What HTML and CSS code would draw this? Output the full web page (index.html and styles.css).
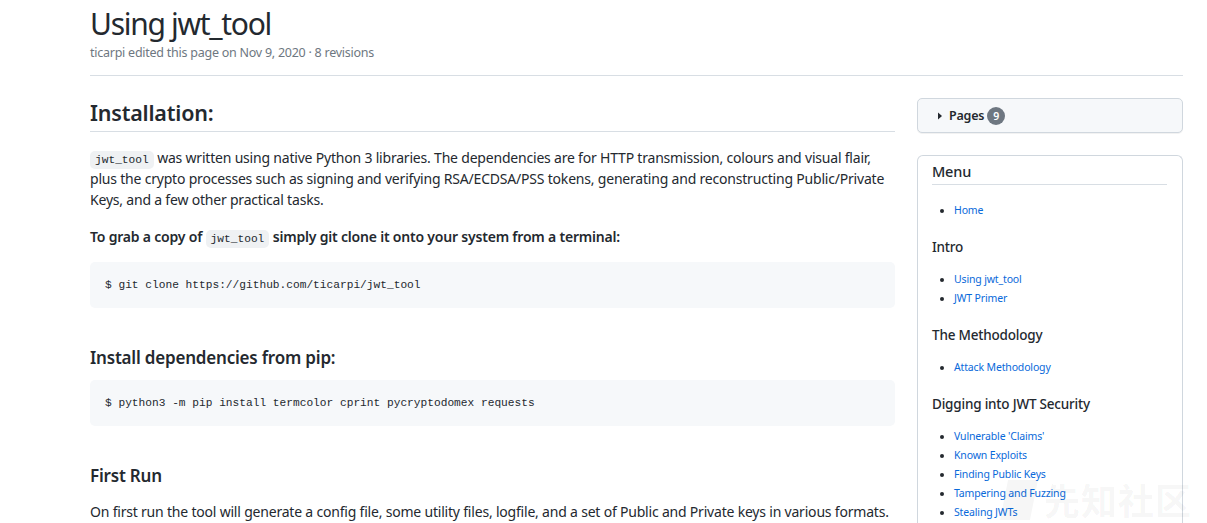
FILE: index.html
```html
<!DOCTYPE html>
<html>
<head>
<meta charset="utf-8">
<link rel="stylesheet" href="styles.css">
</head>
<body>
<div class="page">
  <header class="head">
    <h1 class="title">Using jwt_tool</h1>
    <div class="meta">ticarpi edited this page on Nov 9, 2020 · 8 revisions</div>
  </header>
  <div class="layout">
    <main class="main">
      <h2 class="h2">Installation:</h2>
      <p class="p"><code class="ic">jwt_tool</code> was written using native Python 3 libraries. The dependencies are for HTTP transmission, colours and visual flair, plus the crypto processes such as signing and verifying RSA/ECDSA/PSS tokens, generating and reconstructing Public/Private Keys, and a few other practical tasks.</p>
      <p class="p"><strong>To grab a copy of <code class="ic">jwt_tool</code> simply git clone it onto your system from a terminal:</strong></p>
      <pre class="pre">$ git clone https://github.com/ticarpi/jwt_tool</pre>
      <h3 class="h3">Install dependencies from pip:</h3>
      <pre class="pre">$ python3 -m pip install termcolor cprint pycryptodomex requests</pre>
      <h3 class="h3">First Run</h3>
      <p class="p">On first run the tool will generate a config file, some utility files, logfile, and a set of Public and Private keys in various formats.</p>
    </main>
    <aside class="side">
      <div class="pages">
        <svg class="caret" width="6" height="8" viewBox="0 0 6 8"><path d="M1 0.5 L5 4 L1 7.5 Z" fill="#24292f"/></svg>
        <span class="pages-label">Pages</span>
        <span class="count">9</span>
      </div>
      <div class="menu">
        <div class="menu-title">Menu</div>
        <ul class="list"><li><a href="#">Home</a></li></ul>
        <div class="sec">Intro</div>
        <ul class="list"><li><a href="#">Using jwt_tool</a></li><li><a href="#">JWT Primer</a></li></ul>
        <div class="sec">The Methodology</div>
        <ul class="list"><li><a href="#">Attack Methodology</a></li></ul>
        <div class="sec">Digging into JWT Security</div>
        <ul class="list"><li><a href="#">Vulnerable 'Claims'</a></li><li><a href="#">Known Exploits</a></li><li><a href="#">Finding Public Keys</a></li><li><a href="#">Tampering and Fuzzing</a></li><li><a href="#">Stealing JWTs</a></li></ul>
      </div>
    </aside>
  </div>
</div>
<div class="watermark"><svg class="wm-logo" width="38" height="40" viewBox="0 0 38 40"><path d="M8 0 H38 L30 40 H0 Z" fill="rgba(0,0,0,0.035)"/></svg><span>先知社区</span></div>
</body>
</html>
```
FILE: styles.css
```css
* { box-sizing: border-box; }
html, body { margin: 0; padding: 0; background: #fff; }
body {
  font-family: "Noto Sans", "Open Sans", sans-serif;
  color: #24292f;
  overflow: hidden;
  height: 523px;
}
.page {
  width: 1093px;
  margin-left: 90px;
}
.head {
  padding-top: 4px;
  border-bottom: 1px solid #d8dee4;
  padding-bottom: 14px;
}
.title {
  font-size: 30px;
  font-weight: 400;
  margin: 0;
  line-height: 40px;
  letter-spacing: -1.3px;
}
.meta {
  font-size: 12.5px;
  color: #6e7781;
  margin-top: 1px;
  line-height: 16px;
  letter-spacing: -0.25px;
}
.layout {
  display: flex;
  gap: 22px;
  margin-top: 22px;
}
.main {
  width: 805px;
  flex: none;
}
.side {
  width: 266px;
  flex: none;
}
.h2 {
  font-size: 21.5px;
  font-weight: 600;
  margin: 0;
  padding-top: 0;
  line-height: 30px;
  padding-bottom: 3px;
  border-bottom: 1px solid #d8dee4;
  letter-spacing: -0.2px;
}
.p {
  font-size: 14px;
  line-height: 21px;
  margin: 15px 0 0;
  letter-spacing: -0.2px;
}
.p + .p { margin-top: 16px; }
strong { font-weight: 600; }
.ic {
  font-family: "Liberation Mono", "DejaVu Sans Mono", monospace;
  font-size: 11.2px;
  line-height: 1;
  background: #eff1f3;
  border-radius: 5px;
  padding: 3px 5px;
  letter-spacing: 0;
  font-weight: 400;
}
.pre {
  font-family: "Liberation Mono", "DejaVu Sans Mono", monospace;
  font-size: 11.2px;
  background: #f6f8fa;
  border-radius: 5px;
  margin: 15px 0 0;
  padding: 15px 15px;
  line-height: 16px;
  height: 46px;
  color: #24292f;
}
.h3 {
  font-size: 17px;
  font-weight: 600;
  margin: 38px 0 0;
  line-height: 24px;
  letter-spacing: -0.2px;
}
.h3 + .pre { margin-top: 10px; }
.h3 + .p { margin-top: 13px; }
.pages {
  height: 35px;
  background: #f6f8fa;
  border: 1px solid #d0d7de;
  border-radius: 5px;
  box-shadow: 0 1px 0 rgba(31,35,40,0.06);
  display: flex;
  align-items: center;
  padding-left: 19px;
  margin-top: 0;
}
.caret { margin-right: 6px; }
.pages-label {
  font-size: 12.5px;
  font-weight: 600;
  letter-spacing: -0.2px;
}
.count {
  display: inline-flex;
  align-items: center;
  justify-content: center;
  width: 18px;
  height: 18px;
  border-radius: 9px;
  background: #6e7781;
  color: #fff;
  font-size: 10.5px;
  font-weight: 600;
  margin-left: 3px;
}
.menu {
  margin-top: 22px;
  border: 1px solid #d0d7de;
  border-bottom: none;
  border-radius: 6px 6px 0 0;
  padding: 5px 15px 20px 14px;
  height: 400px;
}
.menu-title {
  font-size: 14.5px;
  font-weight: 500;
  line-height: 20px;
  padding-bottom: 3px;
  border-bottom: 1px solid #d8dee4;
  letter-spacing: -0.2px;
}
.sec {
  font-size: 13.5px;
  font-weight: 500;
  line-height: 20px;
  margin-top: 17px;
  letter-spacing: -0.2px;
}
.list {
  margin: 13px 0 0;
  padding-left: 22px;
  font-size: 10.5px;
  line-height: 19px;
  letter-spacing: -0.15px;
}
.list li { height: 19px; }
.list li::marker { color: #24292f; font-size: 10.5px; }
.list a {
  color: #0969da;
  text-decoration: none;
}
.menu-title + .list { margin-top: 16px; }
.watermark {
  position: absolute;
  left: 1000px;
  top: 480px;
  display: flex;
  align-items: flex-start;
  gap: 6px;
  font-family: "Noto Sans CJK SC", sans-serif;
  font-size: 36px;
  line-height: 38px;
  color: rgba(0,0,0,0.055);
  font-weight: 700;
  letter-spacing: 1px;
}
```
